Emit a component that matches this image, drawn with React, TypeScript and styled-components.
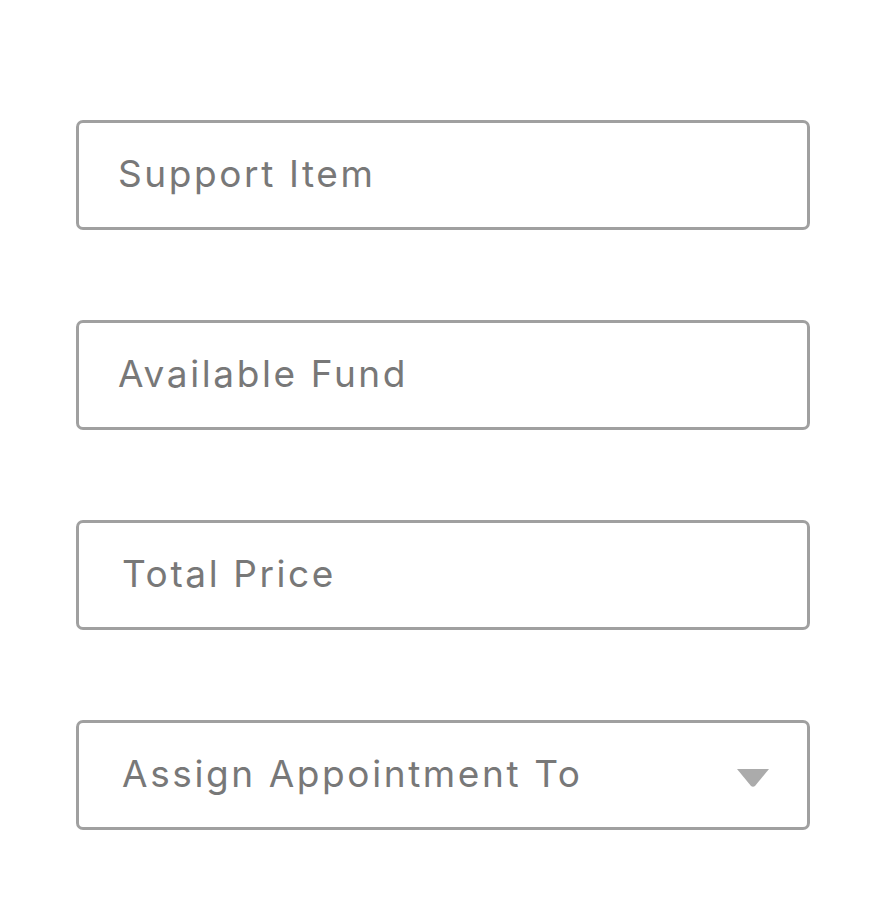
import React from "react";
import styled, { createGlobalStyle } from "styled-components";

const Global = createGlobalStyle`
  html, body { margin: 0; padding: 0; background: #ffffff; }
  body { font-family: "Inter", "Open Sans", sans-serif; }
`;

const Form = styled.div`
  display: flex;
  flex-direction: column;
  gap: 90px;
  padding: 120px 0 0 76px;
  width: 734px;
`;

const Field = styled.div<{ $pad: number }>`
  box-sizing: border-box;
  height: 110px;
  border: 3px solid #a0a0a0;
  border-radius: 7px;
  display: flex;
  align-items: center;
  justify-content: space-between;
  padding: 0 38px 0 ${(p) => p.$pad}px;
`;

const Placeholder = styled.span`
  font-family: "Inter", "Open Sans", sans-serif;
  font-size: 37px;
  line-height: 40px;
  font-weight: 400;
  color: #787878;
  letter-spacing: 2.6px;
  white-space: nowrap;
  margin-top: -2px;
`;

const Caret = styled.svg`
  width: 32px;
  height: 18px;
  flex: none;
  margin-top: 6px;
`;

export default function App() {
  return (
    <>
      <Global />
      <Form>
        <Field $pad={39}>
          <Placeholder>Support Item</Placeholder>
        </Field>
        <Field $pad={39}>
          <Placeholder>Available Fund</Placeholder>
        </Field>
        <Field $pad={43}>
          <Placeholder>Total Price</Placeholder>
        </Field>
        <Field $pad={43}>
          <Placeholder>Assign Appointment To</Placeholder>
          <Caret viewBox="0 0 32 18">
            <path d="M0 0 H32 L18 17 Q16 18.5 14 17 Z" fill="#ababab" />
          </Caret>
        </Field>
      </Form>
    </>
  );
}
